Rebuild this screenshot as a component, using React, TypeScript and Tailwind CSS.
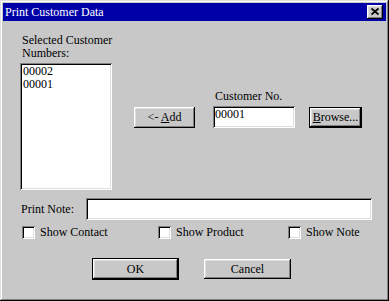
import React from 'react';

const raised =
  'shadow-[inset_-1px_-1px_#000,inset_1px_1px_#fff,inset_-2px_-2px_#808080,inset_2px_2px_#dfdfdf]';
const sunken =
  'shadow-[inset_1px_1px_#808080,inset_-1px_-1px_#fff,inset_2px_2px_#000,inset_-2px_-2px_#dfdfdf]';

const Check: React.FC<{ label: string; className?: string }> = ({ label, className }) => (
  <label className={`flex items-center ${className ?? ''}`}>
    <span className={`w-[13px] h-[13px] bg-white shrink-0 ${sunken}`} />
    <span className="ml-[5px] leading-[13px]">{label}</span>
  </label>
);

export default function App() {
  const customers = ['00002', '00001'];

  return (
    <div className="w-[389px] h-[301px] bg-[#c8c8c8] p-[3px] text-[12px] text-black font-['Liberation_Serif','Times_New_Roman',serif] shadow-[inset_-1px_-1px_#000,inset_1px_1px_#dfdfdf,inset_-2px_-2px_#808080,inset_2px_2px_#fff] flex flex-col whitespace-nowrap">
      {/* title bar */}
      <div className="h-[18px] bg-[#0000a8] flex items-center pl-[2px] pr-[3px] shrink-0">
        <span className="text-white leading-[13px] flex-1">Print Customer Data</span>
        <button className={`w-[16px] h-[14px] bg-[#c8c8c8] flex items-center justify-center ${raised}`}>
          <svg width="8" height="7" viewBox="0 0 8 7" className="mt-[-1px]">
            <path d="M0.5 0.5 L7.5 6.5 M7.5 0.5 L0.5 6.5" stroke="#000" strokeWidth="1.8" />
          </svg>
        </button>
      </div>

      {/* top section */}
      <div className="flex items-start pl-[17px]">
        <div className="w-[92px] mt-[13px]">
          <div className="leading-[13px] pl-[2px]">
            Selected Customer
            <br />
            Numbers:
          </div>
          <div className={`mt-[3px] h-[127px] bg-white pt-[2px] pl-[3px] ${sunken}`}>
            {customers.map((c) => (
              <div key={c} className="leading-[13px]">
                {c}
              </div>
            ))}
          </div>
        </div>

        <button className={`ml-[22px] mt-[86px] w-[61px] h-[21px] bg-[#c8c8c8] leading-[13px] ${raised}`}>
          &lt;- <u>A</u>dd
        </button>

        <div className="ml-[18px] mt-[69px]">
          <div className="leading-[13px] pl-[2px]">Customer No.</div>
          <div className={`mt-[3px] w-[82px] h-[22px] bg-white pl-[2px] pt-[2px] leading-[13px] ${sunken}`}>
            00001
          </div>
        </div>

        <button
          className={`ml-[14px] mt-[86px] w-[53px] h-[21px] bg-[#c8c8c8] border border-black leading-[13px] ${raised}`}
        >
          <u>B</u>rowse...
        </button>
      </div>

      {/* print note */}
      <div className="flex items-center mt-[8px] pl-[18px]">
        <span className="w-[65px] leading-[13px] shrink-0">Print Note:</span>
        <div className={`w-[286px] h-[22px] bg-white ${sunken}`} />
      </div>

      {/* options */}
      <div className="flex items-center mt-[6px] pl-[19px]">
        <Check label="Show Contact" className="w-[136px]" />
        <Check label="Show Product" className="w-[130px]" />
        <Check label="Show Note" />
      </div>

      {/* actions */}
      <div className="flex items-start mt-[19px] pl-[89px]">
        <button className={`w-[87px] h-[22px] bg-[#c8c8c8] border border-black leading-[13px] ${raised}`}>
          OK
        </button>
        <button className={`ml-[25px] mt-[1px] w-[87px] h-[20px] bg-[#c8c8c8] leading-[13px] ${raised}`}>
          Cancel
        </button>
      </div>
    </div>
  );
}
